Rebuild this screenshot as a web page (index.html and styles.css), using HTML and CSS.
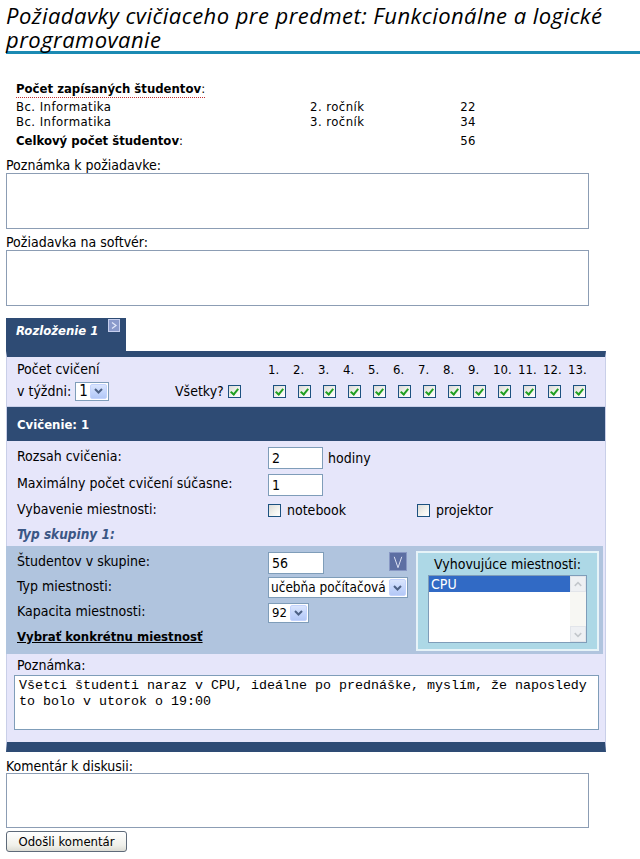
FILE: index.html
```html
<!DOCTYPE html>
<html lang="sk">
<head>
<meta charset="utf-8">
<title>Požiadavky cvičiaceho</title>
<link rel="stylesheet" href="styles.css">
</head>
<body>
<div class="page">
  <h1 class="title">Požiadavky cvičiaceho pre predmet: Funkcionálne a logické programovanie</h1>

  <div class="stats">
    <div class="stats-head"><span class="dotted"><b>Počet zapísaných študentov</b>:</span></div>
    <div class="row"><span>Bc. Informatika</span><span>2. ročník</span><span class="num">22</span></div>
    <div class="row"><span>Bc. Informatika</span><span>3. ročník</span><span class="num">34</span></div>
    <div class="row total"><span><b>Celkový počet študentov</b>:</span><span></span><span class="num">56</span></div>
  </div>

  <div class="field-label first">Poznámka k požiadavke:</div>
  <textarea class="area"></textarea>
  <div class="field-label">Požiadavka na softvér:</div>
  <textarea class="area"></textarea>

  <div class="tabs">
    <div class="tab">
      <span class="tab-title">Rozloženie 1</span>
      <svg class="tab-icon" width="12" height="13" viewBox="0 0 12 13"><rect x="0.5" y="0.5" width="11" height="12" fill="#8a9acb" stroke="#c6cfee"/><path d="M4 3.5 L8 6.5 L4 9.5" fill="none" stroke="#e4e9fa" stroke-width="1.2"/></svg>
    </div>
  </div>

  <div class="panel">
    <div class="weeks">
      <div class="w-label">Počet cvičení</div>
      <div></div>
      <div class="wn">1.</div><div class="wn">2.</div><div class="wn">3.</div><div class="wn">4.</div><div class="wn">5.</div><div class="wn">6.</div><div class="wn">7.</div><div class="wn">8.</div><div class="wn">9.</div><div class="wn">10.</div><div class="wn">11.</div><div class="wn">12.</div><div class="wn">13.</div>
      <div class="w-sel">v týždni: <span class="select sel-small"><span class="sel-text">1</span><span class="sel-btn"><svg width="9" height="6" viewBox="0 0 9 6"><path d="M1 1 L4.5 4.5 L8 1" fill="none" stroke="#4d6185" stroke-width="2"/></svg></span></span></div>
      <div class="w-all">Všetky? <span class="cb on"></span></div>
      <div class="wc"><span class="cb on"></span></div><div class="wc"><span class="cb on"></span></div><div class="wc"><span class="cb on"></span></div><div class="wc"><span class="cb on"></span></div><div class="wc"><span class="cb on"></span></div><div class="wc"><span class="cb on"></span></div><div class="wc"><span class="cb on"></span></div><div class="wc"><span class="cb on"></span></div><div class="wc"><span class="cb on"></span></div><div class="wc"><span class="cb on"></span></div><div class="wc"><span class="cb on"></span></div><div class="wc"><span class="cb on"></span></div><div class="wc"><span class="cb on"></span></div>
    </div>

    <div class="ex-head">Cvičenie: 1</div>

    <div class="ex-fields">
      <div class="frow r27"><span class="flabel">Rozsah cvičenia:</span><span class="input w55">2</span><span class="unit">hodiny</span></div>
      <div class="frow r27"><span class="flabel">Maximálny počet cvičení súčasne:</span><span class="input w55">1</span></div>
      <div class="frow r24"><span class="flabel plain">Vybavenie miestnosti:</span><span class="opt"><span class="cb"></span> notebook</span><span class="opt"><span class="cb"></span> projektor</span></div>
      <div class="frow r24"><span class="group-title">Typ skupiny 1:</span></div>
    </div>

    <div class="group">
      <div class="group-left">
        <div class="frow g25"><span class="flabel">Študentov v skupine:</span><span class="input w56">56</span><span class="vbtn"><svg width="17" height="18" viewBox="0 0 17 18"><path d="M4.5 3.5 L8.5 15 L12.5 3.5" fill="none" stroke="#e3e8f7" stroke-width="1"/></svg></span></div>
        <div class="frow g25"><span class="flabel">Typ miestnosti:</span><span class="select sel-wide"><span class="sel-text">učebňa počítačová</span><span class="sel-btn"><svg width="9" height="6" viewBox="0 0 9 6"><path d="M1 1 L4.5 4.5 L8 1" fill="none" stroke="#4d6185" stroke-width="2"/></svg></span></span></div>
        <div class="frow g25"><span class="flabel">Kapacita miestnosti:</span><span class="select sel-cap"><span class="sel-text">92</span><span class="sel-btn"><svg width="9" height="6" viewBox="0 0 9 6"><path d="M1 1 L4.5 4.5 L8 1" fill="none" stroke="#4d6185" stroke-width="2"/></svg></span></span></div>
        <div class="frow g25"><a class="pick" href="#">Vybrať konkrétnu miestnosť</a></div>
      </div>
      <div class="rooms">
        <div class="rooms-title">Vyhovujúce miestnosti:</div>
        <div class="listbox">
          <div class="list-items"><div class="list-item sel">CPU</div></div>
          <div class="scroll">
            <span class="sbtn"><svg width="15" height="15" viewBox="0 0 15 15"><path d="M4 9 L7.5 5.5 L11 9" fill="none" stroke="#c3c7cc" stroke-width="1.6"/></svg></span>
            <span class="strack"></span>
            <span class="sbtn"><svg width="15" height="15" viewBox="0 0 15 15"><path d="M4 6 L7.5 9.5 L11 6" fill="none" stroke="#c3c7cc" stroke-width="1.6"/></svg></span>
          </div>
        </div>
      </div>
    </div>

    <div class="note">
      <div class="note-label">Poznámka:</div>
      <textarea class="note-area">Všetci študenti naraz v CPU, ideálne po prednáške, myslím, že naposledy to bolo v utorok o 19:00</textarea>
    </div>
  </div>

  <div class="field-label comment">Komentár k diskusii:</div>
  <textarea class="area last"></textarea>
  <button class="send" type="button">Odošli komentár</button>
</div>
</body>
</html>
```

FILE: styles.css
```css
* { box-sizing: border-box; }
body {
  margin: 0;
  font-family: "DejaVu Sans Condensed", "DejaVu Sans", sans-serif;
  font-size: 14px;
  color: #000;
  background: #fff;
}
.page { padding-left: 6px; }

.title {
  margin: 0;
  padding: 3px 12px 0 0;
  font-family: "Open Sans", sans-serif;
  font-style: italic;
  font-weight: normal;
  font-size: 22px;
  letter-spacing: 0.45px;
  line-height: 24px;
  border-bottom: 3px solid #1b8ab3;
  color: #000;
}

.stats {
  margin: 27px 0 0 10px;
  width: 460px;
}
.stats-head { line-height: 16px; height: 18px; font-size: 13px; }
.dotted { border-bottom: 1px dotted #c03030; padding-bottom: 1px; }
.stats b { font-weight: bold; font-size: 13px; letter-spacing: 0; }
.row {
  display: grid;
  grid-template-columns: 294px 120px 46px;
  font-size: 13px;
  letter-spacing: 0.45px;
  line-height: 15px;
}
.row .num { text-align: right; }
.row.total { margin-top: 4px; }

.field-label { line-height: 14px; margin-top: 6px; }
.field-label.first { margin-top: 10px; }
.field-label.comment { margin-top: 7px; }
.area {
  display: block;
  width: 583px;
  height: 56px;
  margin: 1px 0 0 0;
  border: 1px solid #8c9db4;
  background: #fff;
  resize: none;
  padding: 2px;
  font: inherit;
}
.area.last { margin-top: 0; height: 55px; }

.tabs { margin-top: 12px; display: flex; }
.tab {
  width: 120px;
  height: 33px;
  background: #2e4b74;
  display: flex;
  align-items: flex-start;
  padding: 1px 6px 0 10px;
  justify-content: space-between;
}
.tab-title {
  color: #fff;
  font-weight: bold;
  font-style: italic;
  font-size: 13px;
  line-height: 22px;
  padding-top: 1px;
  white-space: nowrap;
}
.tab-icon { display: block; flex: none; }

.panel {
  width: 600px;
  background: #e6e6fa;
  border-top: 6px solid #2e4b74;
  border-bottom: 10px solid #2e4b74;
  border-left: 1px solid #c9cfe8;
  border-right: 1px solid #c9cfe8;
}

.weeks {
  display: grid;
  grid-template-columns: 158px 93px repeat(13, 25px);
  grid-template-rows: 22px 22px;
  padding: 1px 0 0 10px;
  height: 49px;
  align-items: center;
}
.wn { font-size: 13px; }
.w-sel { display: flex; align-items: center; gap: 4px; }
.w-all { display: flex; align-items: center; gap: 4px; }
.wc { padding-left: 5px; display: flex; align-items: center; }

.cb {
  display: inline-block;
  width: 13px;
  height: 13px;
  border: 1px solid #1c5180;
  background: linear-gradient(135deg, #dcdcd7 0%, #f4f4f0 60%, #ffffff 100%);
  vertical-align: middle;
  position: relative;
  flex: none;
}
.cb.on::after {
  content: "";
  position: absolute;
  left: 3px;
  top: 1px;
  width: 3px;
  height: 6px;
  border-right: 2px solid #21a121;
  border-bottom: 2px solid #21a121;
  transform: rotate(40deg);
}

.select {
  display: inline-flex;
  align-items: stretch;
  background: #fff;
  border: 1px solid #7f9db9;
  height: 20px;
}
.sel-text { flex: 1; padding: 0 3px; line-height: 18px; white-space: nowrap; overflow: hidden; }
.sel-btn {
  width: 17px;
  flex: none;
  margin: 1px;
  background: linear-gradient(180deg, #dae5fd 0%, #c1d3fb 60%, #b4c8f6 100%);
  border: 1px solid #c3d3fd;
  border-radius: 2px;
  display: flex;
  align-items: center;
  justify-content: center;
}
.sel-small { width: 34px; height: 19px; font-size: 15px; }
.sel-small .sel-text { line-height: 17px; }
.sel-wide { width: 140px; height: 21px; font-size: 13.5px; }
.sel-wide .sel-text { line-height: 19px; padding: 0 2px; }
.sel-cap { width: 41px; font-size: 13px; }

.ex-head {
  background: #2e4b74;
  color: #fff;
  font-weight: bold;
  font-size: 13px;
  height: 35px;
  line-height: 35px;
  padding-left: 10px;
  border-top: 1px solid #c9cfe8;
}

.ex-fields { padding: 3px 0 0 10px; }
.frow { display: flex; align-items: center; }
.r27 { height: 27px; }
.r24 { height: 24px; }
.g25 { height: 25px; }
.flabel { width: 251px; flex: none; margin-bottom: 4px; }
.flabel.plain { margin-bottom: 2px; }
.input {
  display: inline-block;
  height: 22px;
  border: 1px solid #7f9db9;
  background: #fff;
  padding: 0 3px;
  line-height: 20px;
  font-size: 14px;
}
.w55 { width: 55px; }
.w56 { width: 56px; }
.unit { margin-left: 5px; }
.opt { width: 149px; display: inline-flex; align-items: center; gap: 6px; }
.group-title { color: #3b5785; font-weight: bold; font-style: italic; font-size: 13.5px; }

.group {
  width: 597px;
  margin-left: -1px;
  background: #b0c4de;
  display: flex;
  height: 108px;
}
.group-left { width: 410px; padding: 4px 0 0 11px; }
.vbtn {
  margin-left: 65px;
  width: 18px;
  height: 19px;
  background: #5d6fa3;
  border: 1px solid #8898c4;
  display: flex;
  align-items: center;
  justify-content: center;
  align-self: flex-start;
  margin-top: 2px;
}
.vbtn svg { display: block; }
.pick {
  color: #000;
  font-weight: bold;
  font-size: 13px;
  text-decoration: underline;
  margin-bottom: 2px;
}

.rooms {
  margin-top: 5px;
  width: 183px;
  height: 100px;
  background: #add8e6;
  border: 2px solid #e6f3f8;
  padding: 3px 10px 0 10px;
}
.rooms-title { text-align: center; line-height: 16px; white-space: nowrap; }
.listbox {
  margin-top: 3px;
  height: 68px;
  border: 1px solid #7f9db9;
  background: #fff;
  display: flex;
}
.list-items { flex: 1; }
.list-item { line-height: 16px; padding-left: 2px; }
.list-item.sel { background: #316ac5; color: #fff; }
.scroll {
  width: 16px;
  display: flex;
  flex-direction: column;
  background: #f7f7f3;
}
.sbtn {
  height: 16px;
  background: #eef0f3;
  border: 1px solid #e2e5ea;
  display: flex;
  align-items: center;
  justify-content: center;
}
.strack { flex: 1; }

.note { padding: 4px 0 12px 7px; }
.note-label { line-height: 14px; padding-left: 3px; }
.note-area {
  display: block;
  margin-top: 3px;
  width: 585px;
  height: 55px;
  border: 1px solid #7f9db9;
  resize: none;
  font-family: "Liberation Mono", monospace;
  font-size: 13.33px;
  line-height: 16px;
  padding: 2px 4px;
  background: #fff;
  color: #000;
}

.send {
  display: block;
  margin-top: 3px;
  width: 121px;
  height: 21px;
  font-family: "DejaVu Sans Condensed", sans-serif;
  font-size: 13px;
  border: 1px solid #5e6a79;
  border-radius: 3px;
  background: linear-gradient(180deg, #ffffff 0%, #f0f0ea 70%, #dcdcd4 100%);
  padding: 0;
  color: #000;
}
```
